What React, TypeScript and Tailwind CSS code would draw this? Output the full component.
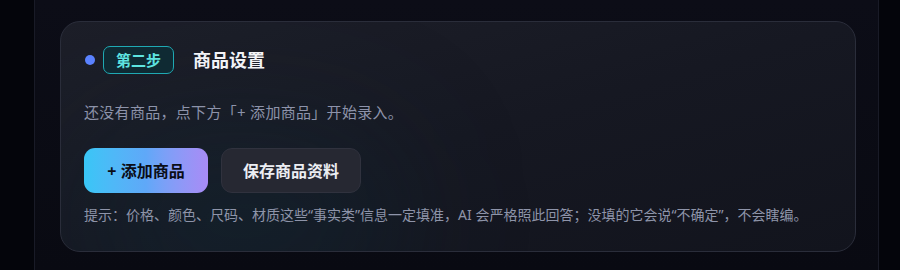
import React from "react";

const font = { fontFamily: '"Noto Sans", "Noto Sans CJK SC", sans-serif' };

export default function App() {
  return (
    <div className="h-[270px] w-[900px] overflow-hidden bg-[#04050b]" style={font}>
      <div className="ml-[34px] mr-[21px] h-full border-x border-[#191b27] bg-gradient-to-b from-[#0c0d17] to-[#090a12] pl-[25px] pr-[22px] pt-[21px]">
        {/* Card */}
        <section className="relative h-[231px] overflow-hidden rounded-[20px] border border-[#2a2d3a] bg-gradient-to-br from-[#1d1f29] via-[#161822] to-[#12141d] px-[23px] pt-[24px]">
          <div className="pointer-events-none absolute -bottom-[60px] left-[20px] h-[180px] w-[320px] rounded-full bg-[#0f3340]/30 blur-3xl" />
          <div className="relative">
            {/* Header */}
            <div className="flex h-[28px] items-center">
              <span className="ml-[1px] h-[10px] w-[10px] rounded-full bg-[#5a82ff]" />
              <span className="ml-[8px] flex h-[28px] items-center rounded-[7px] border border-[#1fa9b3] bg-[#0f2a33] px-[12px] text-[15px] font-semibold text-[#5ee4e0]">
                第二步
              </span>
              <h2 className="ml-[19px] text-[18px] font-bold text-[#f2f3f7]">商品设置</h2>
            </div>

            <p className="mt-[27px] text-[15px] leading-[22px] tracking-[0.3px] text-[#8d93aa]">
              还没有商品，点下方「+ 添加商品」开始录入。
            </p>

            {/* Actions */}
            <div className="mt-[25px] flex gap-[13px]">
              <button className="h-[45px] w-[124px] rounded-[11px] bg-gradient-to-r from-[#38c6f6] via-[#5fa8f8] to-[#a88bf6] text-[16px] font-bold text-[#0b0d16]">
                + 添加商品
              </button>
              <button className="h-[45px] w-[140px] rounded-[11px] border border-[#30323e] bg-[#262832] text-[16px] font-bold text-[#eceef3]">
                保存商品资料
              </button>
            </div>

            <p className="mt-[12px] text-[14px] leading-[20px] text-[#8e94a9]">
              提示：价格、颜色、尺码、材质这些“事实类”信息一定填准，AI 会严格照此回答；没填的它会说“不确定”，不会瞎编。
            </p>
          </div>
        </section>
      </div>
    </div>
  );
}
